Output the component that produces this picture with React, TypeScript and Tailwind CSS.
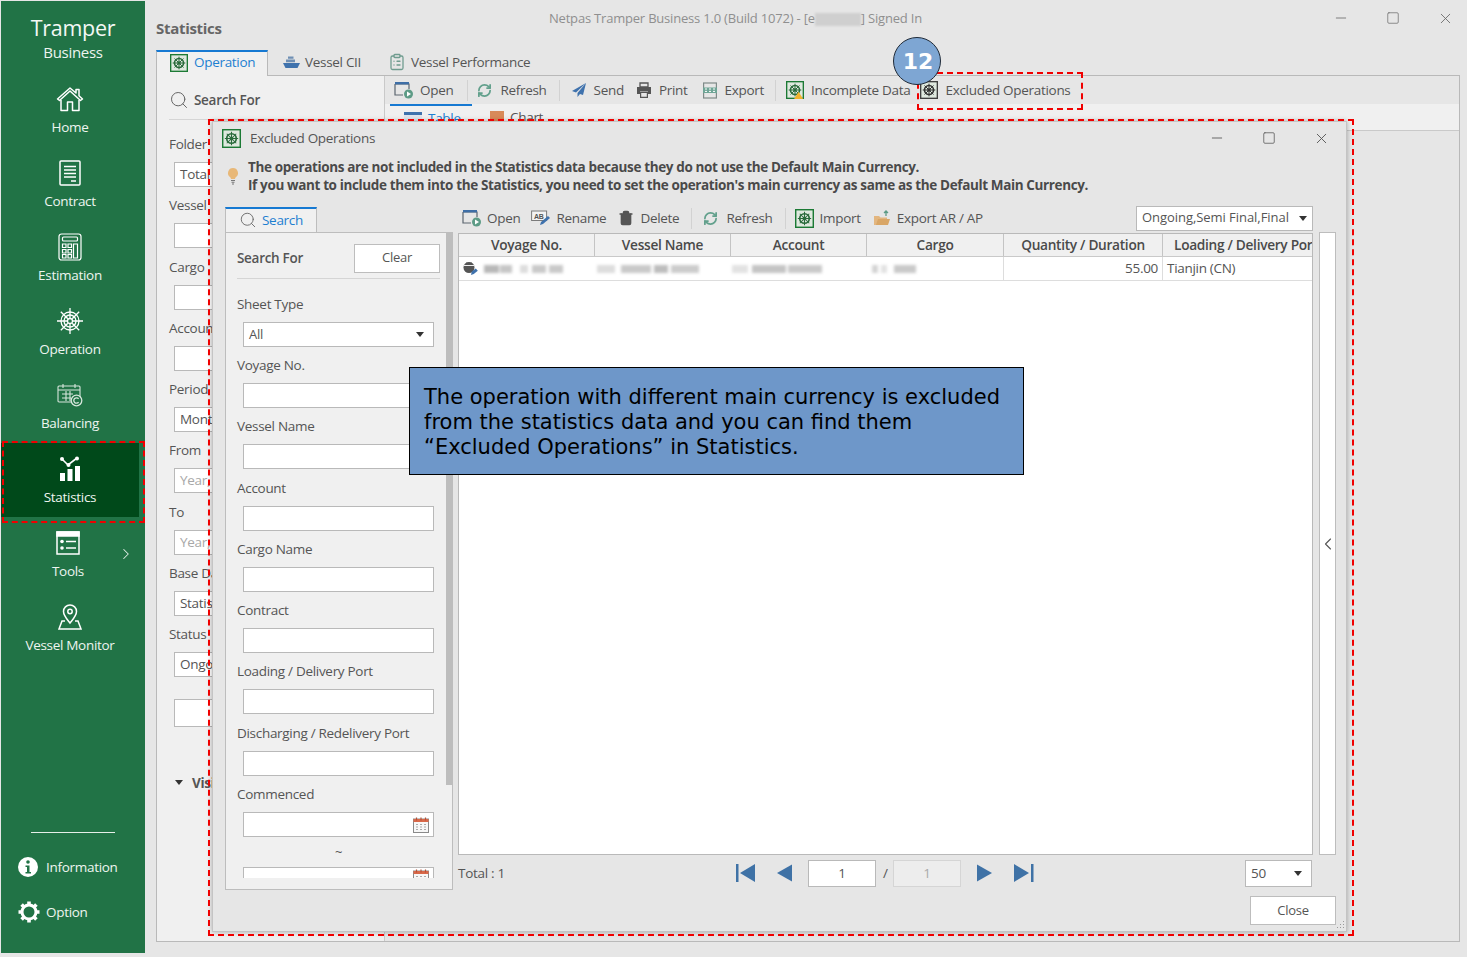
import React from "react";
import { ChevronRight, ChevronLeft, ClipboardList, Minus, RefreshCw, Search, Square, Trash2, X } from "lucide-react";

const OpIcon = ({ size = 19, warn = false, gray = false }: { size?: number; warn?: boolean; gray?: boolean }) => {
  const c = gray ? "#3f3f3f" : "#1c7a35";
  const h = gray ? "#333333" : "#2a6b3c";
  return (
    <svg width={size} height={size} viewBox="0 0 20 20" className="shrink-0">
      <rect x="0.75" y="0.75" width="18.5" height="18.5" fill="#dfe9df" stroke={c} strokeWidth="1.5" />
      <circle cx="10" cy="10" r="5" fill="none" stroke={h} strokeWidth="1.8" />
      <circle cx="10" cy="10" r="2" fill={h} />
      <path d="M10 3v14M3 10h14M5 5l10 10M15 5L5 15" stroke={h} strokeWidth="1.1" />
      {warn && <path d="M14 12l5 8H9z" fill="#f2b32c" />}
    </svg>
  );
};

const OpenIcon = () => (
  <svg width="20" height="18" viewBox="0 0 20 18" className="shrink-0">
    <path d="M1 3h14v5M1 3v11h8" fill="none" stroke="#5c6670" strokeWidth="1.2" />
    <rect x="1" y="1" width="14" height="2.4" fill="#3e6ea6" />
    <circle cx="14.5" cy="13" r="4.5" fill="#5d9b86" />
    <path d="M13 10.6l4 2.4-4 2.4z" fill="#fff" />
  </svg>
);

const Refresh = () => <RefreshCw size={15} strokeWidth={2.8} color="#62a08c" className="shrink-0" />;

const SendIcon = () => (
  <svg width="16" height="16" viewBox="0 0 16 16" className="shrink-0">
    <path d="M15 1L1 9l4 1.5zM15 1L6.5 11v4l2.5-3 3 1z" fill="#3f72ad" />
  </svg>
);

const PrintIcon = () => (
  <svg width="16" height="16" viewBox="0 0 16 16" className="shrink-0">
    <path d="M4 1h8v4H4z" fill="none" stroke="#555555" strokeWidth="1.3" />
    <path d="M1 5h14v7h-3V9.500H4V12H1z" fill="#555555" />
    <path d="M4.600 10.500h6.800v4.800H4.600z" fill="none" stroke="#555555" strokeWidth="1.2" />
  </svg>
);

const ExportIcon = () => (
  <svg width="16" height="17" viewBox="0 0 16 17" className="shrink-0">
    <rect x="1.6" y="1" width="12.8" height="15" fill="none" stroke="#7f8a88" strokeWidth="1.2" />
    <rect x="1" y="5.5" width="14" height="5.5" fill="#6fa596" />
    <path d="M3 7h2M7 7h2M11 7h2M3 9.4h2M7 9.4h2M11 9.4h2" stroke="#fff" strokeWidth="1" />
  </svg>
);

const RenameIcon = () => (
  <svg width="20" height="16" viewBox="0 0 20 16" className="shrink-0">
    <rect x="0.6" y="1" width="15" height="9.5" fill="#f3f3f3" stroke="#7a7a7a" strokeWidth="1" />
    <text x="3" y="8.5" fontSize="7" fontWeight="700" fill="#555555" fontFamily="Liberation Sans, sans-serif">AB</text>
    <path d="M9 15l1-3 7-6 2 2-7 6z" fill="#3f72ad" />
  </svg>
);

const FolderUp = () => (
  <svg width="18" height="17" viewBox="0 0 18 17" className="shrink-0">
    <path d="M1 6h5l1.5 1.5H14V15H1z" fill="#e3b67f" />
    <path d="M3 15l2-6h12l-2 6z" fill="#d9a666" />
    <path d="M13 6V1M11 3l2-2 2 2" fill="none" stroke="#5d9b86" strokeWidth="1.3" />
  </svg>
);

const Calendar = () => (
  <svg width="18" height="18" viewBox="0 0 18 18" className="shrink-0">
    <rect x="1.5" y="3" width="15" height="13.5" fill="#f7f7f7" stroke="#8a8a8a" strokeWidth="1" />
    <rect x="1.5" y="3" width="15" height="3" fill="#d9694a" />
    <path d="M4.5 1.5v3M9 1.5v3M13.5 1.5v3" stroke="#b5533a" strokeWidth="1.2" />
    <path d="M4 8.5h2M8 8.5h2M12 8.5h2M4 11h2M8 11h2M12 11h2M4 13.5h2M8 13.5h2M12 13.5h2" stroke="#a9a9a9" strokeWidth="1.2" />
  </svg>
);

const HomeIcon = () => (
  <svg width="28" height="26" viewBox="0 0 28 26" fill="none" stroke="#fff" strokeWidth="1.5" strokeLinejoin="round">
    <path d="M1.5 13L14 2l6 5V3.5h3v6.3l3.5 3.2-2 1.5L14 5 3.5 14.5z" />
    <path d="M5 14v10.5h6.5V16h5v8.5H23V14" />
  </svg>
);
const ContractIcon = () => (
  <svg width="22" height="26" viewBox="0 0 22 26" fill="none" stroke="#fff" strokeWidth="1.5">
    <rect x="1" y="1" width="20" height="24" rx="1" />
    <path d="M5 6.5h12M5 10h12M5 13.5h12M5 17h12M12 21h5" />
  </svg>
);
const EstimationIcon = () => (
  <svg width="24" height="28" viewBox="0 0 24 28" fill="none" stroke="#fff" strokeWidth="1.2">
    <rect x="1" y="1" width="22" height="26" rx="2.5" />
    <rect x="4.5" y="4" width="15" height="4" rx="1" />
    <path d="M4.5 11h3.5v3.5H4.5zM10 11h3.5v3.5H10zM4.5 16.5h3.5V20H4.5zM10 16.5h3.5V20H10zM4.5 21.5h3.5V25H4.5zM10 21.5h3.5V25H10zM15.5 11h4v14h-4z" />
  </svg>
);
const WheelIcon = () => (
  <svg width="28" height="28" viewBox="0 0 28 28" fill="none" stroke="#fff" strokeWidth="1.3">
    <circle cx="14" cy="14" r="9" />
    <circle cx="14" cy="14" r="6" />
    <circle cx="14" cy="14" r="2.5" />
    <path d="M14 1v10M14 17v10M1 14h10M17 14h10M4.8 4.8l7 7M16.2 16.2l7 7M23.2 4.8l-7 7M11.8 16.2l-7 7" />
  </svg>
);
const BalancingIcon = () => (
  <svg width="26" height="24" viewBox="0 0 26 24" fill="none" stroke="#d7e6dc" strokeWidth="1.1">
    <rect x="1" y="3" width="22" height="16" rx="1" />
    <path d="M1 7h22M6 1v4M18 1v4M5 11h11M5 15h9M9 8v10M13 8v10" />
    <circle cx="19.5" cy="17.5" r="5.3" fill="#217346" strokeWidth="1.3" />
    <path d="M21.6 15.8a2.7 2.7 0 1 0 0 3.4" strokeWidth="1.3" />
  </svg>
);
const StatsIcon = () => (
  <svg width="22" height="26" viewBox="0 0 22 26" fill="#fff">
    <rect x="1" y="17" width="5" height="8" />
    <rect x="8.5" y="13" width="5" height="12" />
    <rect x="16" y="10" width="5" height="15" />
    <path d="M3 3l6 6 9-7" fill="none" stroke="#fff" strokeWidth="1.6" />
    <circle cx="3" cy="3" r="2" />
    <circle cx="9.5" cy="9" r="2" />
    <circle cx="18" cy="2.5" r="2" />
  </svg>
);
const ToolsIcon = () => (
  <svg width="24" height="24" viewBox="0 0 24 24" fill="none" stroke="#fff" strokeWidth="1.5">
    <rect x="1" y="1" width="22" height="22" />
    <rect x="1" y="1" width="22" height="4" fill="#fff" />
    <circle cx="6" cy="10.5" r="1.8" fill="#fff" stroke="none" />
    <circle cx="6" cy="17" r="1.8" fill="#fff" stroke="none" />
    <path d="M10 10.5h10M10 17h10" />
  </svg>
);
const MonitorIcon = () => (
  <svg width="24" height="26" viewBox="0 0 24 26" fill="none" stroke="#fff" strokeWidth="1.5">
    <path d="M12 19C8 14 5.5 11.5 5.5 7.5a6.5 6.5 0 0 1 13 0C18.500 11.500 16 14 12 19z" />
    <circle cx="12" cy="7.500" r="2.200" />
    <path d="M7 17H4l-3 8h22l-3-8h-3" />
  </svg>
);
const InfoIcon = () => (
  <svg width="20" height="20" viewBox="0 0 20 20" className="shrink-0">
    <circle cx="10" cy="10" r="10" fill="#fff" />
    <circle cx="10" cy="5" r="1.800" fill="#217346" />
    <path d="M7.500 8.500h4v6.500h1.500v1.500H7.500V15h1.500v-5H7.500z" fill="#217346" />
  </svg>
);
const GearIcon = () => (
  <svg width="24" height="24" viewBox="0 0 24 24" className="shrink-0" fill="none" stroke="#fff">
    <circle cx="12" cy="12" r="7" strokeWidth="3" />
    <path d="M12 1.500v4M12 18.500v4M1.500 12h4M18.500 12h4M4.600 4.600l2.800 2.800M16.600 16.600l2.800 2.800M19.400 4.600l-2.800 2.800M7.400 16.600l-2.800 2.800" strokeWidth="3.600" />
  </svg>
);
const ShipIcon = () => (
  <svg width="17" height="14" viewBox="0 0 17 14" className="shrink-0">
    <path d="M0 8h17l-2.500 5h-12z" fill="#3f72ad" />
    <path d="M3 7.200V4.500h9V7.200zM5 3.800V1.500h5.500v2.300z" fill="#6f8fb4" />
  </svg>
);
const Bulb = () => (
  <svg width="12" height="18" viewBox="0 0 12 18" className="shrink-0">
    <path d="M6 1a5 5 0 0 1 3 9c-.7.6-1 1.300-1 2H4c0-.7-.3-1.400-1-2A5 5 0 0 1 6 1z" fill="#e8b878" />
    <path d="M4 13.500h4M4.500 15.300h3M5 17h2" stroke="#777777" strokeWidth="1.100" />
  </svg>
);
const ShipDoc = () => (
  <svg width="17" height="15" viewBox="0 0 17 15" className="shrink-0">
    <circle cx="7" cy="6.500" r="5.500" fill="#555555" />
    <path d="M2 4.500h10" stroke="#f0f0f0" strokeWidth="1" />
    <path d="M4 1.500h6v2H4z" fill="#555555" />
    <path d="M9 14l.8-3.500 4-3 2 2.200-4 3.400z" fill="#3f72ad" />
  </svg>
);
const GripIcon = () => (
  <svg width="10" height="10" viewBox="0 0 10 10">
    <path d="M8 1h1v1H8zM5 4h1v1H5zM8 4h1v1H8zM2 7h1v1H2zM5 7h1v1H5zM8 7h1v1H8z" fill="#9a9a9a" />
  </svg>
);

const Caret = () => <span className="border-x-[4px] border-t-[5px] border-x-transparent border-t-[#333333] shrink-0" />;

const NAV: [string, React.ReactNode, boolean?][] = [
  ["Home", <HomeIcon />],
  ["Contract", <ContractIcon />],
  ["Estimation", <EstimationIcon />],
  ["Operation", <WheelIcon />],
  ["Balancing", <BalancingIcon />],
  ["Statistics", <StatsIcon />, true],
];

const SideItem = ({ label, icon, active, shift }: { label: string; icon: React.ReactNode; active?: boolean; shift?: boolean }) => (
  <div className={`h-[74px] flex flex-col items-center shrink-0 w-[138px] ${active ? "bg-[#00491a]" : ""} ${shift ? "pr-[4px]" : ""}`}>
    <div className="h-[50px] flex items-center justify-center pt-[1px]">{icon}</div>
    <div className="text-[13.500px] leading-[18px] text-[#eef5f0] mt-[-5px]">{label}</div>
  </div>
);

const Tool = ({ icon, label, ml, gap = 6 }: { icon: React.ReactNode; label: string; ml?: string; gap?: number }) => (
  <div className={`flex items-center shrink-0 ${ml ?? ""}`} style={{ gap }}>
    {icon}
    <span className="whitespace-nowrap">{label}</span>
  </div>
);

const Sep = ({ ml }: { ml: string }) => <div className={`w-px h-[21px] bg-[#d2d2d2] shrink-0 ${ml}`} />;

const LEFT_FIELDS: [string, string, boolean?][] = [
  ["Folder", "Total"],
  ["Vessel", ""],
  ["Cargo", ""],
  ["Account", ""],
  ["Period", "Monthly"],
  ["From", "Year,", true],
  ["To", "Year,", true],
  ["Base Date", "Statistics"],
  ["Status", "Ongoing"],
];

const SEARCH_FIELDS = ["Voyage No.", "Vessel Name", "Account", "Cargo Name", "Contract", "Loading / Delivery Port", "Discharging / Redelivery Port"];

const Blur = ({ blocks }: { blocks: [number, number, string][] }) => (
  <div className="flex items-center h-[8px] blur-[1.500px]">
    {blocks.map(([w, m, c], i) => (
      <span key={i} className="h-[8px] block" style={{ width: w, marginLeft: m, background: c }} />
    ))}
  </div>
);

const COLS: [string, string][] = [
  ["Voyage No.", "w-[136px]"],
  ["Vessel Name", "w-[136px]"],
  ["Account", "w-[136px]"],
  ["Cargo", "w-[137px]"],
  ["Quantity / Duration", "w-[159px]"],
];

const PageBtn = ({ d }: { d: string }) => (
  <svg width="20" height="20" viewBox="0 0 20 20" className="shrink-0">
    <path d={d} fill="#3f72a6" />
  </svg>
);

export default function App() {
  return (
    <div className="relative w-[1467px] h-[957px] overflow-hidden flex bg-[#e6e6e6] text-[#555555] text-[13px] font-['Open_Sans',sans-serif] tracking-[-0.3px]">
      {/* Sidebar */}
      <aside className="w-[144px] ml-px mt-px h-[952px] bg-[#217346] flex flex-col shrink-0 text-white">
        <div className="h-[72px] flex flex-col items-center pl-[6px] pr-[2px] pt-[12px] shrink-0 w-[140px]">
          <div className="text-[21.500px] leading-[30px] text-[#f4f8f5]">Tramper</div>
          <div className="text-[15px] leading-[20px] mt-[-1px] text-[#eef5f0]">Business</div>
        </div>
        {NAV.map(([l, ic, a]) => (
          <SideItem key={l} label={l} icon={ic} active={a} />
        ))}
        <div className="relative">
          <SideItem label="Tools" icon={<ToolsIcon />} shift />
          <ChevronRight size={18} strokeWidth={1.4} className="absolute left-[116px] top-[28px] text-[#dfece4]" />
        </div>
        <SideItem label="Vessel Monitor" icon={<MonitorIcon />} />
        <div className="mt-auto mb-[120px] ml-[30px] w-[84px] h-px bg-[#e6efe9]" />
        <div className="absolute left-[18px] top-[857px] flex items-center gap-[8px] text-[13.500px] text-[#eef5f0]">
          <InfoIcon />
          <span>Information</span>
        </div>
        <div className="absolute left-[17px] top-[900px] flex items-center gap-[5px] text-[13.500px] text-[#eef5f0]">
          <GearIcon />
          <span>Option</span>
        </div>
      </aside>

      {/* Main */}
      <main className="flex-1 min-w-0 flex flex-col pl-[11px]">
        <div className="h-[49px] flex shrink-0">
          <div className="w-[393px] pt-[17px] text-[15px] font-bold leading-[22px] text-[#666666]">Statistics</div>
          <div className="text-[13px] text-[#8f8f8f] whitespace-nowrap flex items-center h-[38px] tracking-[-0.2px]">
            Netpas Tramper Business 1.0 (Build 1072) - [e
            <span className="w-[46px] h-[13px] bg-[#cfcfcf] blur-[1px] block" />
            ] Signed In
          </div>
          <div className="ml-auto flex items-center gap-[37px] pr-[13px] h-[36px] text-[#666666]">
            <Minus size={16} strokeWidth={1.2} />
            <Square size={14} strokeWidth={1.2} />
            <X size={17} strokeWidth={1.2} />
          </div>
        </div>
        <div className="h-[26px] flex items-end shrink-0 relative z-10">
          <div className="w-[112px] h-[26px] border-t-2 border-t-[#1679d2] border-x border-x-[#b9b9b9] bg-[#f0f0f0] flex items-center gap-[6px] pl-[13px] pb-[3px] text-[#1e7fd0] text-[13.500px] mb-[-1px]">
            <OpIcon size={18} />
            <span>Operation</span>
          </div>
          <div className="flex items-center pb-[1px] h-[25px] text-[13.500px] ml-[15px]">
            <ShipIcon />
            <span className="ml-[5px]">Vessel CII</span>
            <ClipboardList size={18} strokeWidth={1.7} color="#6f9c8f" className="ml-[27px]" />
            <span className="ml-[5px]">Vessel Performance</span>
          </div>
        </div>
        <div className="h-[867px] w-[1304px] border border-[#b9b9b9] flex shrink-0">
          <div className="w-[228px] bg-[#f0f0f0] border-r border-[#c9c9c9] shrink-0 flex flex-col px-[12px] overflow-hidden">
            <div className="flex items-center h-[42px] mt-[2px] gap-[5px] border-b border-[#d5d5d5] pt-[3px] shrink-0 text-[13.500px] font-semibold">
              <Search size={20} strokeWidth={1.2} color="#666666" />
              <span>Search For</span>
            </div>
            <div className="pt-[15px] shrink-0">
              {LEFT_FIELDS.map(([l, v, ph]) => (
                <div key={l} className="h-[61.300px]">
                  <div className="h-[18px] leading-[18px] text-[13.500px] whitespace-nowrap">{l}</div>
                  <div className={`ml-[5px] mt-[9px] h-[25px] w-[200px] bg-white border border-[#b9b9b9] px-[5px] leading-[23px] text-[13.500px] ${ph ? "text-[#a8a8a8]" : ""}`}>{v}</div>
                </div>
              ))}
              <div className="ml-[5px] mt-[12px] h-[28px] w-[200px] bg-white border border-[#b9b9b9]" />
              <div className="mt-[46px] flex items-center gap-[9px] font-bold text-[13.500px] ml-[6px]">
                <Caret />
                <span>Visibility</span>
              </div>
            </div>
          </div>
          <div className="flex-1 min-w-0 flex flex-col">
            <div className="h-[28px] flex items-center text-[13.500px] shrink-0 pl-[9px]">
              <Tool icon={<OpenIcon />} label="Open" />
              <Sep ml="ml-[14px]" />
              <Tool icon={<Refresh />} label="Refresh" ml="ml-[9px]" gap={8} />
              <Sep ml="ml-[12px]" />
              <Tool icon={<SendIcon />} label="Send" ml="ml-[11px]" gap={7} />
              <Tool icon={<PrintIcon />} label="Print" ml="ml-[12px]" gap={7} />
              <Tool icon={<ExportIcon />} label="Export" ml="ml-[14px]" gap={7} />
              <Sep ml="ml-[11px]" />
              <Tool icon={<OpIcon size={18} warn />} label="Incomplete Data" ml="ml-[10px]" gap={7} />
              <Tool icon={<OpIcon size={18} gray />} label="Excluded Operations" ml="ml-[10px]" gap={7} />
            </div>
            <div className="h-[27px] bg-[#f0f0f0] flex items-end pl-[5px] shrink-0 border-b border-[#c9c9c9]">
              <div className="w-[82px] h-[26px] border-t-2 border-t-[#1679d2] text-[#1e7fd0] pl-[14px] flex items-center gap-[6px] text-[13.500px]">
                <span className="w-[18px] h-[13px] border-t-[3px] border-t-[#3f72ad] bg-[#dfe6ee] block" />
                <span>Table</span>
              </div>
              <div className="pl-[18px] text-[13.500px] h-[26px] flex items-center gap-[6px]">
                <span className="w-[14px] h-[12px] bg-[#d88a5a] block" />
                <span>Chart</span>
              </div>
            </div>
          </div>
        </div>
      </main>

      {/* Excluded Operations dialog */}
      <section className="absolute left-[212px] top-[121px] w-[1135px] h-[811px] bg-[#e6e6e6] border border-[#c4c4c4] shadow-[0_0_5px_rgba(0,0,0,0.3)] flex flex-col pl-[12px] pr-[10px] overflow-hidden">
        <div className="h-[34px] flex items-center gap-[9px] shrink-0 pb-[2px] ml-[-3px]">
          <OpIcon size={19} />
          <span className="text-[13.500px]">Excluded Operations</span>
          <div className="ml-auto flex items-center gap-[37px] text-[#555555] mr-[6px]">
            <Minus size={16} strokeWidth={1.3} />
            <Square size={14} strokeWidth={1.3} />
            <X size={17} strokeWidth={1.3} />
          </div>
        </div>
        <div className="h-[36px] flex items-center shrink-0 pl-[2px] gap-[9px] mt-[2px]">
          <Bulb />
          <div className="font-bold text-[13.500px] leading-[18px] text-[#4a4a4a] tracking-[-0.37px] whitespace-nowrap">
            <div>The operations are not included in the Statistics data because they do not use the Default Main Currency.</div>
            <div>If you want to include them into the Statistics, you need to set the operation's main currency as same as the Default Main Currency.</div>
          </div>
        </div>
        <div className="flex-1 min-h-0 flex mt-[13px]">
          {/* left search */}
          <div className="w-[228px] shrink-0 flex flex-col">
            <div className="h-[26px] w-[92px] mb-[-1px] relative border-t-2 border-t-[#1679d2] border-r border-l border-[#bdbdbd] border-b-0 bg-[#f0f0f0] flex items-center gap-[5px] pl-[13px] pb-[2px] text-[13.500px] text-[#1e7fd0]">
              <Search size={18} strokeWidth={1.2} color="#666666" />
              <span>Search</span>
            </div>
            <div className="h-[658px] bg-[#f0f0f0] border border-[#bdbdbd] flex overflow-hidden relative">
              <div className="flex-1 min-w-0 pl-[11px] pr-[12px] flex flex-col">
                <div className="h-[46px] flex items-center justify-between border-b border-[#d5d5d5] shrink-0 pt-[5px]">
                  <span className="font-semibold text-[13.500px]">Search For</span>
                  <div className="w-[86px] h-[29px] bg-white border border-[#bdbdbd] flex items-center justify-center">Clear</div>
                </div>
                <div className="h-[16px] shrink-0" />
                <div className="h-[18px] leading-[18px] text-[13.500px] shrink-0">Sheet Type</div>
                <div className="ml-[6px] mt-[9px] h-[25px] w-[191px] bg-white border border-[#b9b9b9] flex items-center justify-between px-[5px] pr-[9px] shrink-0">
                  <span>All</span>
                  <Caret />
                </div>
                {SEARCH_FIELDS.map((l) => (
                  <div key={l} className="h-[61.300px] pt-[9px] shrink-0">
                    <div className="h-[18px] leading-[18px] text-[13.500px] whitespace-nowrap">{l}</div>
                    <div className="ml-[6px] mt-[9px] h-[25px] w-[191px] bg-white border border-[#b9b9b9]" />
                  </div>
                ))}
                <div className="pt-[9px] shrink-0">
                  <div className="h-[18px] leading-[18px] text-[13.500px]">Commenced</div>
                  <div className="ml-[6px] mt-[9px] h-[25px] w-[191px] bg-white border border-[#b9b9b9] flex items-center justify-end pr-[3px]">
                    <Calendar />
                  </div>
                  <div className="h-[30px] flex items-center justify-center leading-none text-[13px]">~</div>
                  <div className="ml-[6px] h-[11px] w-[191px] bg-white border-x border-t border-[#b9b9b9] flex justify-end pr-[3px] overflow-hidden">
                    <Calendar />
                  </div>
                </div>
              </div>
              <div className="absolute right-0 top-0 w-[6px] h-[552px] bg-[#bdbdbd]" />
            </div>
          </div>

          {/* right side */}
          <div className="flex-1 min-w-0 flex flex-col pl-[5px]">
            <div className="h-[26px] flex items-center text-[13.500px] shrink-0 pl-[4px] pb-[4px]">
              <Tool icon={<OpenIcon />} label="Open" gap={5} />
              <Tool icon={<RenameIcon />} label="Rename" ml="ml-[11px]" gap={5} />
              <Tool icon={<Trash2 size={16} fill="#555555" color="#555555" className="shrink-0" />} label="Delete" ml="ml-[12px]" gap={6} />
              <Sep ml="ml-[12px]" />
              <Tool icon={<Refresh />} label="Refresh" ml="ml-[11px]" gap={8} />
              <Sep ml="ml-[12px]" />
              <Tool icon={<OpIcon size={19} />} label="Import" ml="ml-[9px]" gap={6} />
              <Tool icon={<FolderUp />} label="Export AR / AP" ml="ml-[12px]" gap={6} />
              <div className="ml-auto mr-[23px] w-[177px] h-[25px] bg-white border border-[#b9b9b9] flex items-center justify-between pl-[5px] pr-[5px] text-[13px] tracking-[-0.05px]">
                <span className="whitespace-nowrap">Ongoing,Semi Final,Final</span>
                <Caret />
              </div>
            </div>
            <div className="flex h-[622px] shrink-0">
              <div className="w-[855px] h-[622px] bg-white border border-[#b9b9b9] overflow-hidden shrink-0">
                <div className="flex h-[23px] bg-[#f0f0f0] border-b border-[#c9c9c9] font-semibold text-[13.700px] text-[#4a4a4a]">
                  {COLS.map(([l, w]) => (
                    <div key={l} className={`${w} border-r border-[#c4c4c4] flex items-center justify-center whitespace-nowrap shrink-0`}>{l}</div>
                  ))}
                  <div className="pl-[11px] flex items-center whitespace-nowrap">Loading / Delivery Port</div>
                </div>
                <div className="flex h-[24px] border-b border-[#dddddd] items-center">
                  <div className="w-[136px] shrink-0 h-full flex items-center pl-[3px] gap-[5px]">
                    <ShipDoc />
                    <Blur blocks={[[15, 0, "#b8b8b8"], [12, 1, "#c6c6c6"], [8, 8, "#dddddd"], [14, 4, "#c9c9c9"], [14, 3, "#c9c9c9"]]} />
                  </div>
                  <div className="w-[136px] shrink-0 h-full flex items-center">
                    <Blur blocks={[[18, 2, "#dddddd"], [30, 6, "#c9c9c9"], [14, 3, "#bdbdbd"], [28, 3, "#cccccc"]]} />
                  </div>
                  <div className="w-[136px] shrink-0 h-full flex items-center">
                    <Blur blocks={[[16, 1, "#e2e2e2"], [34, 4, "#c4c4c4"], [34, 2, "#c9c9c9"]]} />
                  </div>
                  <div className="w-[137px] shrink-0 h-full flex items-center border-r border-[#dddddd]">
                    <Blur blocks={[[6, 5, "#d4d4d4"], [6, 3, "#e2e2e2"], [22, 7, "#c9c9c9"]]} />
                  </div>
                  <div className="w-[159px] shrink-0 h-full flex items-center justify-end pr-[4px] border-r border-[#dddddd] text-[13.500px]">55.00</div>
                  <div className="pl-[4px] text-[13.500px]">Tianjin (CN)</div>
                </div>
              </div>
              <div className="ml-[6px] w-[17px] h-[623px] mt-[-1px] bg-white border border-[#bdbdbd] flex items-center justify-center shrink-0">
                <ChevronLeft size={20} strokeWidth={1.3} color="#555555" className="shrink-0" />
              </div>
            </div>
            <div className="h-[36px] flex items-center shrink-0 relative text-[13.500px]">
              <span className="w-[277px] shrink-0">Total : 1</span>
              <PageBtn d="M1 1h2.500v18H1zM20 1v18L5 10z" />
              <div className="ml-[19px]">
                <PageBtn d="M18 1.500v17L3 10z" />
              </div>
              <div className="ml-[14px] w-[68px] h-[27px] bg-white border border-[#b9b9b9] flex items-center justify-center">1</div>
              <span className="mx-[7px] w-[3px]">/</span>
              <div className="w-[68px] h-[27px] bg-[#ededed] border border-[#d5d5d5] flex items-center justify-center text-[#aaaaaa]">1</div>
              <div className="ml-[14px] flex gap-[19px]">
                <PageBtn d="M2 1.500v17L17 10z" />
                <PageBtn d="M0 1v18l15-9zM17 1h2.500v18H17z" />
              </div>
              <div className="ml-auto mr-[24px] w-[67px] h-[27px] bg-white border border-[#b9b9b9] flex items-center justify-between px-[5px] pr-[9px]">
                <span>50</span>
                <Caret />
              </div>
            </div>
            <div className="flex justify-end mt-[5px]">
              <div className="w-[86px] h-[29px] bg-white border border-[#bdbdbd] flex items-center justify-center">Close</div>
            </div>
          </div>
        </div>
        <div className="absolute right-[1px] bottom-[1px]">
          <GripIcon />
        </div>
      </section>

      {/* Annotations */}
      <div className="absolute left-[208px] top-[119px] w-[1146px] h-[817px] border-2 border-dashed border-[#f00000] pointer-events-none" />
      <div className="absolute left-[2px] top-[441px] w-[143px] h-[82px] border-2 border-dashed border-[#f00000] pointer-events-none" />
      <div className="absolute left-[917px] top-[72px] w-[166px] h-[38px] border-2 border-dashed border-[#f00000] pointer-events-none" />
      <div className="absolute left-[893px] top-[37px] w-[48px] h-[48px] rounded-full bg-[#7ea6d3] border border-[#1f2a38] flex items-center justify-center pl-[2px] text-white text-[22px] font-bold tracking-normal font-['DejaVu_Sans',sans-serif]">12</div>
      <div className="absolute left-[409px] top-[367px] w-[615px] h-[108px] bg-[#6e97c9] border border-black pl-[14px] pt-[17px] text-black text-[21px] leading-[25px] tracking-normal font-['DejaVu_Sans',sans-serif] whitespace-nowrap">
        <div>The operation with different main currency is excluded</div>
        <div>from the statistics data and you can find them</div>
        <div>“Excluded Operations” in Statistics.</div>
      </div>
    </div>
  );
}
